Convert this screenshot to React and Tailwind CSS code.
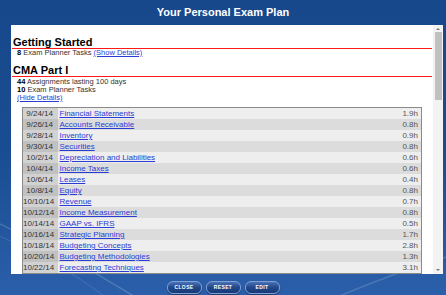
import React from "react";

const rows = [
  ["9/24/14", "Financial Statements", "1.9h"],
  ["9/26/14", "Accounts Receivable", "0.8h"],
  ["9/28/14", "Inventory", "0.9h"],
  ["9/30/14", "Securities", "0.8h"],
  ["10/2/14", "Depreciation and Liabilities", "0.6h"],
  ["10/4/14", "Income Taxes", "0.6h"],
  ["10/6/14", "Leases", "0.4h"],
  ["10/8/14", "Equity", "0.8h"],
  ["10/10/14", "Revenue", "0.7h"],
  ["10/12/14", "Income Measurement", "0.8h"],
  ["10/14/14", "GAAP vs. IFRS", "0.5h"],
  ["10/16/14", "Strategic Planning", "1.7h"],
  ["10/18/14", "Budgeting Concepts", "2.8h"],
  ["10/20/14", "Budgeting Methodologies", "1.3h"],
  ["10/22/14", "Forecasting Techniques", "3.1h"],
];

function Btn({ label }) {
  return (
    <div className="w-[35px] h-[13px] rounded-[6px] border border-[#7d9fd6] bg-gradient-to-b from-[#4a72b6] via-[#22488a] to-[#173a76] flex items-center justify-center text-white text-[5px] font-bold tracking-[0.4px] shadow-[0_1px_1px_rgba(0,0,0,0.4)]">
      {label}
    </div>
  );
}

export default function App() {
  return (
    <div className="relative w-[446px] h-[295px] overflow-hidden flex flex-col bg-gradient-to-b from-[#17488b] via-[#1a4c91] to-[#2b5faa] font-['Liberation_Sans',Arial,sans-serif]">
      <svg className="absolute left-0 top-0 pointer-events-none" width="446" height="295" viewBox="0 0 446 295">
        <path d="M-20 215 Q 60 250 140 300" stroke="rgba(255,255,255,0.18)" strokeWidth="1.5" fill="none" />
        <path d="M-20 228 Q 50 255 110 300" stroke="rgba(255,255,255,0.12)" strokeWidth="1" fill="none" />
        <path d="M330 300 Q 400 270 470 250" stroke="rgba(255,255,255,0.15)" strokeWidth="1.5" fill="none" />
      </svg>
      <div className="relative h-[25px] flex items-center justify-center text-white font-bold text-[11px]">
        Your Personal Exam Plan
      </div>
      <div className="relative ml-[11px] w-[432px] h-[249px] bg-white flex overflow-hidden">
        <div className="flex-1 pt-[11px] text-[#333]">
          <div className="mx-[1px] pl-[1px] text-[11px] leading-[12px] font-bold text-black border-b border-[#ff1a1a]">
            Getting Started
          </div>
          <div className="pl-[6px] text-[7.5px] leading-[8px]">
            <span className="font-bold text-black">8</span> Exam Planner Tasks{" "}
            <span className="text-[#2a3cd6] underline">(Show Details)</span>
          </div>
          <div className="mt-[7px] mx-[1px] pl-[1px] text-[11px] leading-[12px] font-bold text-black border-b border-[#ff1a1a]">
            CMA Part I
          </div>
          <div className="mt-[1px] pl-[6px] text-[7.5px] leading-[8px]">
            <div>
              <span className="font-bold text-black">44</span> Assignments lasting 100 days
            </div>
            <div>
              <span className="font-bold text-black">10</span> Exam Planner Tasks
            </div>
            <div className="text-[#2a3cd6] underline">(Hide Details)</div>
          </div>
          <div className="mt-[5px] ml-[11px] mr-[11px] border border-[#8a8a8a] text-[8px] leading-[11px]">
            {rows.map(([d, t, h], i) => (
              <div
                key={d}
                className={`flex h-[11px] ${i % 2 === 0 ? "bg-[#eeeeee]" : "bg-[#dcdcdc]"}`}
              >
                <div
                  className={`w-[35px] text-right pr-[5px] text-[#333] ${i % 2 === 0 ? "bg-[#d2d2d2]" : "bg-[#c1c1c1]"}`}
                >
                  {d}
                </div>
                <div className="flex-1 pl-[1.5px] text-[#2a3cd6] underline whitespace-nowrap">{t}</div>
                <div className="pr-[3px] text-[#555]">{h}</div>
              </div>
            ))}
          </div>
        </div>
        <div className="w-[10px] bg-[#f3f3f3] flex flex-col items-center">
          <div className="h-[7px] flex items-center justify-center">
            <div className="w-0 h-0 border-l-[2px] border-r-[2px] border-b-[2px] border-l-transparent border-r-transparent border-b-[#777]" />
          </div>
          <div className="w-[7px] h-[68px] bg-[#c1c1c1]" />
          <div className="flex-1" />
          <div className="h-[7px] flex items-center justify-center mb-[1px]">
            <div className="w-0 h-0 border-l-[2px] border-r-[2px] border-t-[2px] border-l-transparent border-r-transparent border-t-[#777]" />
          </div>
        </div>
      </div>
      <div className="relative mt-[7px] flex justify-center gap-[4px]">
        <Btn label="CLOSE" />
        <Btn label="RESET" />
        <Btn label="EDIT" />
      </div>
    </div>
  );
}
